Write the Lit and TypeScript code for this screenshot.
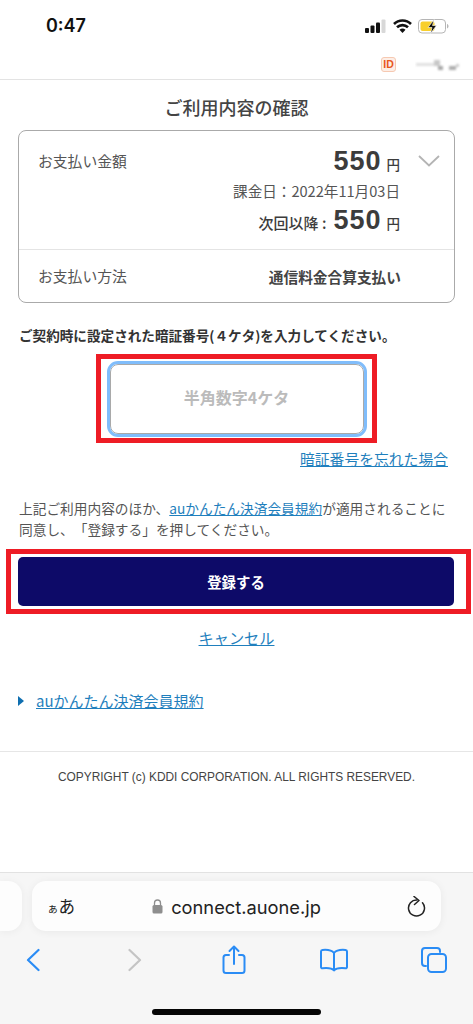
import { css, html, LitElement } from 'lit';
import { customElement } from 'lit/decorators.js';

@customElement('app-root')
export class AppRoot extends LitElement {
  static styles = css`
    :host {
      display: block;
      width: 473px;
      height: 1024px;
      overflow: hidden;
      background: #ffffff;
      color: #444444;
      font-family: "Noto Sans CJK JP", "Noto Sans", sans-serif;
      text-spacing-trim: space-all;
    }

    * {
      box-sizing: border-box;
    }

    a {
      color: #1f7fbd;
      text-decoration: underline;
    }

    .page {
      height: 1024px;
      display: flex;
      flex-direction: column;
    }

    .status {
      height: 52px;
      flex: none;
      display: flex;
      justify-content: space-between;
      align-items: center;
      padding: 0 24px 0 46px;
    }

    .time {
      font: 600 18px/20px Inter, Roboto, sans-serif;
      color: #111111;
    }

    .status-icons {
      display: flex;
      align-items: center;
      gap: 6px;
    }

    .account {
      height: 28px;
      flex: none;
      display: flex;
      justify-content: flex-end;
      align-items: center;
      gap: 19px;
      padding: 0 12px 2px 0;
      border-bottom: 1px solid #e3e3e3;
    }

    .id-badge {
      width: 15px;
      height: 15px;
      display: flex;
      align-items: center;
      justify-content: center;
      border: 1px solid #f6c9b2;
      border-radius: 3px;
      background: #fdeee6;
      color: #e8561c;
      font: 700 10.5px/1 "Liberation Sans", sans-serif;
    }

    .masked {
      fill: #9a9a9a;
      filter: blur(1px);
    }

    main {
      flex: 1;
      display: flex;
      flex-direction: column;
    }

    h1 {
      margin: 15px 0 11px;
      height: 24px;
      font-size: 18px;
      line-height: 24px;
      font-weight: 500;
      text-align: center;
    }

    .card {
      margin: 0 18px;
      height: 173px;
      flex: none;
      border: 1px solid #aaaaaa;
      border-radius: 8px;
      display: flex;
      flex-direction: column;
    }

    .amount {
      height: 119px;
      flex: none;
      display: flex;
      padding: 16px 14px 0 19px;
      border-bottom: 1px solid #e4e4e4;
    }

    .label {
      font-size: 14.8px;
      line-height: 20px;
      color: #555555;
    }

    .amount .label {
      margin-top: 4px;
    }

    .values {
      flex: 1;
      display: flex;
      flex-direction: column;
      align-items: flex-end;
    }

    .price {
      display: flex;
      align-items: baseline;
      justify-content: flex-end;
      font-family: "Liberation Sans", sans-serif;
      font-weight: 700;
      font-size: 27px;
      line-height: 28px;
      letter-spacing: 1px;
      color: #3c3c3c;
    }

    .yen {
      margin-left: 5px;
      font-family: "Noto Sans CJK JP", sans-serif;
      font-size: 13.5px;
      font-weight: 500;
      letter-spacing: 0;
    }

    .charge-date {
      margin-top: 4px;
      font-size: 14.6px;
      line-height: 18px;
      color: #555555;
    }

    .next {
      margin-top: 6px;
      font-family: "Noto Sans CJK JP", sans-serif;
      font-size: 15px;
      font-weight: 500;
      letter-spacing: 0;
    }

    .next .num {
      margin-left: 7px;
      font-family: "Liberation Sans", sans-serif;
      font-size: 27px;
      font-weight: 700;
      letter-spacing: 1px;
    }

    .chevron {
      width: 22px;
      margin-left: 18px;
      margin-top: 8px;
      flex: none;
    }

    .method {
      flex: 1;
      display: flex;
      justify-content: space-between;
      align-items: center;
      padding: 0 53px 0 19px;
    }

    .method b {
      font-size: 14.7px;
      font-weight: 700;
      color: #444444;
    }

    .prompt {
      margin: 22px 0 0 19px;
      font-size: 13.6px;
      line-height: 20px;
      font-weight: 700;
      color: #333333;
      white-space: nowrap;
    }

    .pin-frame {
      margin: 9px auto 0;
      width: 281px;
      height: 89px;
      flex: none;
      border: 5px solid #ee1c25;
      display: flex;
      align-items: center;
      justify-content: center;
    }

    .pin {
      width: 254px;
      height: 70px;
      padding-bottom: 3px;
      border: 1.5px solid #a9a9a9;
      border-radius: 8px;
      outline: 3.5px solid #80bdfb;
      display: flex;
      align-items: center;
      justify-content: center;
      font-size: 16px;
      font-weight: 700;
      color: #bbbbbb;
    }

    .forgot {
      margin: 4px 25px 0 0;
      text-align: right;
      font-size: 14.8px;
      line-height: 24px;
    }

    .terms {
      margin: 27px 0 0 19px;
      font-size: 13.7px;
      line-height: 21px;
      color: #555555;
      white-space: nowrap;
    }

    .submit-frame {
      margin: 9px 2px 0 6px;
      height: 65px;
      flex: none;
      border: 5px solid #ee1c25;
      padding: 3px 12px 3px 7px;
    }

    .submit {
      height: 100%;
      display: flex;
      align-items: center;
      justify-content: center;
      border-radius: 5px;
      background: #0d0a68;
      color: #ffffff;
      font-size: 14.4px;
      font-weight: 700;
    }

    .cancel {
      margin-top: 11px;
      text-align: center;
      font-size: 15.2px;
      line-height: 24px;
    }

    .rule-link {
      margin: 40px 0 0 18px;
      display: flex;
      align-items: center;
      gap: 12px;
      font-size: 15px;
      line-height: 24px;
    }

    .triangle {
      width: 6px;
      height: 10px;
      background: #0f6fb0;
      clip-path: polygon(0 0, 100% 50%, 0 100%);
    }

    footer {
      margin-top: 38px;
      padding-top: 16px;
      border-top: 1px solid #e6e6e6;
      text-align: center;
      font: 11.9px/18px "Liberation Sans", sans-serif;
      color: #444444;
    }

    .browser {
      height: 152px;
      flex: none;
      background: #f6f6f6;
      border-top: 1px solid #e2e2e2;
      display: flex;
      flex-direction: column;
    }

    .tabs-row {
      margin-top: 8px;
      height: 50px;
      flex: none;
      display: flex;
      gap: 10px;
    }

    .peek {
      width: 22px;
      border-radius: 0 14px 14px 0;
      background: #fdfdfd;
      box-shadow: 0 1px 8px rgba(0, 0, 0, 0.05);
    }

    .url-bar {
      width: 409px;
      display: grid;
      grid-template-columns: 1fr auto 1fr;
      align-items: center;
      padding: 0 15px;
      border-radius: 14px;
      background: #fdfdfd;
      box-shadow: 0 1px 8px rgba(0, 0, 0, 0.06);
      color: #222222;
    }

    .aa {
      font-size: 16.5px;
      line-height: 1;
    }

    .aa small {
      font-size: 11.5px;
    }

    .host {
      display: flex;
      align-items: center;
      gap: 8px;
      font: 18.3px/24px Inter, Roboto, sans-serif;
      padding-top: 1px;
    }

    .reload {
      justify-self: end;
      display: flex;
    }

    .tools {
      margin-top: 10px;
      padding: 0 19px 0 13px;
      display: flex;
      justify-content: space-between;
      align-items: center;
    }

    .tool {
      width: 40px;
      height: 38px;
      display: flex;
      align-items: center;
      justify-content: center;
    }

    .forward {
      margin-left: 3px;
    }

    .home {
      width: 169px;
      height: 6px;
      margin: 30px auto 0;
      border-radius: 3px;
      background: #050505;
    }
  `;

  private renderStatusIcons() {
    return html`
      <div class="status-icons">
        <svg width="22" height="14" viewBox="0 0 22 14">
          <rect x="0" y="9" width="4" height="5" rx="1" fill="#111" />
          <rect x="5.5" y="6.5" width="4" height="7.5" rx="1" fill="#111" />
          <rect x="11" y="3.5" width="4" height="10.5" rx="1" fill="#111" />
          <rect x="16.5" y="0.5" width="4" height="13.5" rx="1" fill="#d8d8d8" />
        </svg>
        <svg width="19" height="14" viewBox="0 0 19 14">
          <path d="M1 5a12 12 0 0 1 17 0M4 8.300a8 8 0 0 1 11 0" fill="none" stroke="#111" stroke-width="2.6" />
          <path d="M6.500 10.800a4.400 4.400 0 0 1 6 0L9.500 14z" fill="#111" />
        </svg>
        <svg width="31" height="15" viewBox="0 0 31 15">
          <rect x="0.5" y="0.5" width="27" height="13.5" rx="3.5" fill="none" stroke="#b5b5b5" />
          <rect x="2.500" y="2.500" width="14" height="9.500" rx="2" fill="#f8cf2c" />
          <path d="M29 5v4.500c1-.3 1.500-1.200 1.500-2.200S30 5.300 29 5z" fill="#b5b5b5" />
          <path d="M16 0.500l-6 8h4L12.500 14.500l6-8h-4z" fill="#111" stroke="#fff" stroke-width="0.6" />
        </svg>
      </div>
    `;
  }

  private renderMaskedName() {
    return html`
      <svg width="46" height="14" viewBox="0 0 46 14">
        <g class="masked">
          <rect x="1" y="5" width="18" height="3" opacity="0.3" />
          <rect x="19" y="2" width="6" height="6" opacity="0.55" />
          <rect x="23" y="8" width="5" height="4" opacity="0.85" />
          <rect x="34" y="8" width="7" height="4" opacity="0.8" />
          <rect x="41" y="6" width="3" height="3" opacity="0.5" />
        </g>
      </svg>
    `;
  }

  private renderTools() {
    const stroke = '#2a8cf5';
    return html`
      <div class="tools">
        <div class="tool">
          <svg width="14" height="24" viewBox="0 0 14 24">
            <path d="M12.500 2L2 12l10.500 10" fill="none" stroke=${stroke} stroke-width="2.2" stroke-linecap="round" stroke-linejoin="round" />
          </svg>
        </div>
        <div class="tool">
          <svg class="forward" width="14" height="24" viewBox="0 0 14 24">
            <path d="M1.500 2L12 12 1.500 22" fill="none" stroke="#c4c4c4" stroke-width="2.2" stroke-linecap="round" stroke-linejoin="round" />
          </svg>
        </div>
        <div class="tool">
          <svg width="24" height="30" viewBox="0 0 24 30">
            <path d="M7 10H4a2.500 2.500 0 0 0-2.500 2.500v13A2.500 2.500 0 0 0 4 28h16a2.500 2.500 0 0 0 2.500-2.500v-13A2.500 2.500 0 0 0 20 10h-3M12 19V2M7.500 6L12 1.500 16.500 6" fill="none" stroke=${stroke} stroke-width="2" stroke-linecap="round" stroke-linejoin="round" />
          </svg>
        </div>
        <div class="tool">
          <svg width="28" height="24" viewBox="0 0 28 24">
            <path d="M14 5C12 2.500 8 1.500 2.500 2 1.600 2.100 1 2.700 1 3.500V19c0 .8.600 1.300 1.500 1.200C7.500 19.700 12 20 14 22.500c2-2.500 6.500-2.800 11.500-2.300.9.100 1.500-.4 1.500-1.200V3.500c0-.8-.6-1.400-1.500-1.500C20 1.500 16 2.500 14 5zM14 5v17" fill="none" stroke=${stroke} stroke-width="2" stroke-linejoin="round" />
          </svg>
        </div>
        <div class="tool">
          <svg width="26" height="26" viewBox="0 0 26 26">
            <path d="M5 19H4a3 3 0 0 1-3-3V4a3 3 0 0 1 3-3h12a3 3 0 0 1 3 3v1" fill="none" stroke=${stroke} stroke-width="2" stroke-linecap="round" />
            <rect x="7" y="7" width="18" height="18" rx="3.500" fill="none" stroke=${stroke} stroke-width="2" />
          </svg>
        </div>
      </div>
    `;
  }

  render() {
    return html`
      <div class="page">
        <div class="status">
          <span class="time">0:47</span>
          ${this.renderStatusIcons()}
        </div>
        <div class="account">
          <span class="id-badge">ID</span>
          ${this.renderMaskedName()}
        </div>
        <main>
          <h1>ご利用内容の確認</h1>
          <section class="card">
            <div class="amount">
              <span class="label">お支払い金額</span>
              <div class="values">
                <div class="price">550<span class="yen">円</span></div>
                <div class="charge-date">課金日：2022年11月03日</div>
                <div class="price next">次回以降 :<span class="num">550</span><span class="yen">円</span></div>
              </div>
              <svg class="chevron" height="12" viewBox="0 0 22 12">
                <path d="M1 1l10 9.500L21 1" fill="none" stroke="#b4b4b4" stroke-width="1.800" />
              </svg>
            </div>
            <div class="method">
              <span class="label">お支払い方法</span>
              <b>通信料金合算支払い</b>
            </div>
          </section>
          <p class="prompt">ご契約時に設定された暗証番号(４ケタ)を入力してください。</p>
          <div class="pin-frame"><div class="pin">半角数字4ケタ</div></div>
          <div class="forgot"><a href="#">暗証番号を忘れた場合</a></div>
          <p class="terms">
            上記ご利用内容のほか、<a href="#">auかんたん決済会員規約</a>が適用されることに<br />同意し、「登録する」を押してください。
          </p>
          <div class="submit-frame"><div class="submit">登録する</div></div>
          <div class="cancel"><a href="#">キャンセル</a></div>
          <div class="rule-link"><span class="triangle"></span><a href="#">auかんたん決済会員規約</a></div>
          <footer>COPYRIGHT (c) KDDI CORPORATION. ALL RIGHTS RESERVED.</footer>
        </main>
        <div class="browser">
          <div class="tabs-row">
            <div class="peek"></div>
            <div class="url-bar">
              <span class="aa"><small>ぁ</small>あ</span>
              <span class="host">
                <svg width="11" height="15" viewBox="0 0 11 15">
                  <path d="M2.500 6.500V4a3 3 0 0 1 6 0v2.500" fill="none" stroke="#8e8e8e" stroke-width="1.300" />
                  <rect x="0.500" y="6" width="10" height="8.500" rx="1.500" fill="#8e8e8e" />
                </svg>
                connect.auone.jp
              </span>
              <span class="reload">
                <svg width="19" height="21" viewBox="0 0 19 21">
                  <path d="M15.500 6.700A8 8 0 1 1 10 4" fill="none" stroke="#222" stroke-width="1.500" stroke-linecap="round" />
                  <path d="M7 0.500l5 4-4.500 4" fill="none" stroke="#222" stroke-width="1.500" stroke-linecap="round" stroke-linejoin="round" />
                </svg>
              </span>
            </div>
          </div>
          ${this.renderTools()}
          <div class="home"></div>
        </div>
      </div>
    `;
  }
}
